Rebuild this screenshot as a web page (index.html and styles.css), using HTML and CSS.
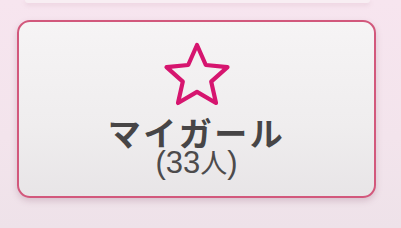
FILE: index.html
```html
<!DOCTYPE html>
<html lang="ja">
<head>
<meta charset="utf-8">
<link rel="stylesheet" href="styles.css">
</head>
<body>
<div class="page">
  <div class="prev-card"></div>
  <div class="card">
    <svg class="star" width="70" height="68" viewBox="0 0 70 68">
      <path d="M35 4 L43.8 24 L65.5 26.1 L49.2 40.6 L54 62 L35 50.9 L16 62 L20.8 40.6 L4.5 26.1 L26.2 24 Z" fill="none" stroke="#d6156f" stroke-width="4.2" stroke-linejoin="round"/>
    </svg>
    <div class="title">マイガール</div>
    <div class="count">(33<span class="kanji">人</span>)</div>
  </div>
</div>
</body>
</html>
```
FILE: styles.css
```css
html, body {
  margin: 0;
  padding: 0;
}
body {
  width: 401px;
  height: 228px;
  overflow: hidden;
  background: linear-gradient(180deg, #f7e5ef 0%, #f3e4ec 60%, #eee2e9 100%);
  font-family: "Noto Sans CJK JP", "Noto Sans", sans-serif;
}
.page {
  display: flex;
  flex-direction: column;
  padding: 0 25px 0 17px;
}
.prev-card {
  height: 3px;
  margin: 0 6px 0 8px;
  background: #f8eef3;
  border-radius: 0 0 10px 10px;
  box-shadow: 0 2px 4px rgba(190, 140, 165, 0.25);
}
.card {
  margin-top: 17px;
  height: 174px;
  border: 2px solid #d2587c;
  border-radius: 13px;
  background: linear-gradient(180deg, #f6f4f5 0%, #efedee 60%, #e8e5e7 100%);
  box-shadow: 0 3px 6px rgba(150, 100, 125, 0.28);
  display: flex;
  flex-direction: column;
  align-items: center;
}
.star {
  margin-top: 19px;
  display: block;
}
.title {
  margin-top: 6px;
  font-size: 33px;
  font-weight: 700;
  color: #474546;
  line-height: 34px;
  letter-spacing: 2.5px;
  padding-left: 0;
}
.count {
  font-family: "Liberation Sans", "Noto Sans CJK JP", sans-serif;
  font-size: 31px;
  font-weight: 400;
  color: #4d4b4c;
  line-height: 26px;
}
.kanji {
  font-family: "Noto Sans CJK JP", sans-serif;
  font-size: 27px;
  line-height: 26px;
}
```
